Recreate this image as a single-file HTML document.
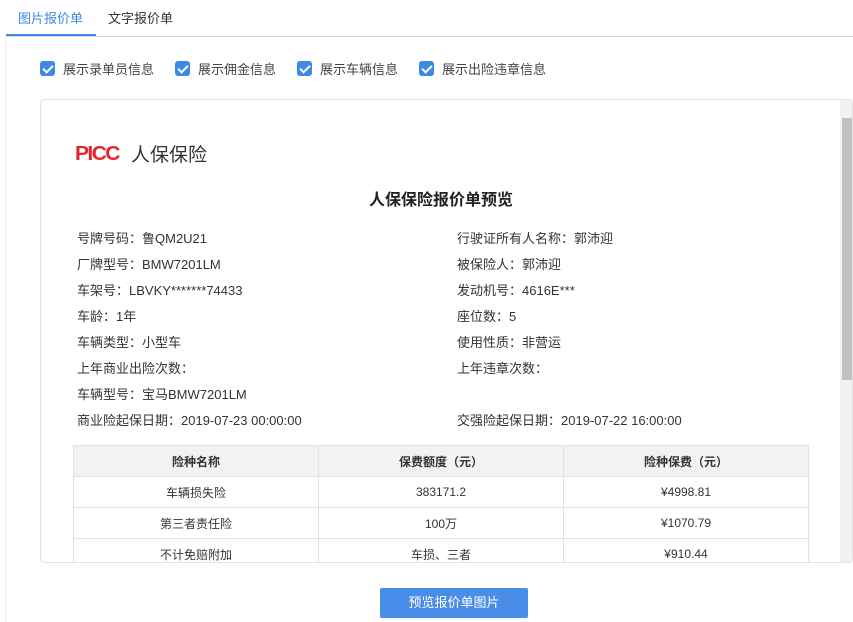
<!DOCTYPE html>
<html><head><meta charset="utf-8"><style>
*{margin:0;padding:0;box-sizing:border-box}
body{width:853px;height:622px;background:#fff;font-family:"Liberation Sans","Noto Sans CJK SC",sans-serif;color:#333;position:relative;overflow:hidden;font-size:13px}
.tabs{position:absolute;left:6px;top:0;right:0;height:37px;border-bottom:1px solid #c9d6e6}
.tab{position:absolute;top:8px;font-size:13px}
.act{color:#3d8ae6;left:12px}
.ul{position:absolute;left:0;width:90px;top:34px;height:2px;background:#3d8ae6}
.lb{position:absolute;left:5px;top:37px;width:1px;height:585px;background:#eee}
.cb{position:absolute;top:59px;display:flex;align-items:center;font-size:13px;color:#444}
.cb i{width:15px;height:15px;background:#3d8ae6;border-radius:3px;margin-right:8px;display:inline-block;position:relative}
.cb i:after{content:"";position:absolute;left:5px;top:2px;width:4px;height:8px;border:solid #fff;border-width:0 2px 2px 0;transform:rotate(45deg)}
.panel{position:absolute;left:40px;top:99px;width:813px;height:464px;border:1px solid #e3e3e3;border-radius:4px;overflow:hidden}
.sb{position:absolute;right:0;top:0;width:12px;height:100%;background:#f1f1f1}
.th{position:absolute;left:2px;top:18px;width:10px;height:262px;background:#c1c1c1}
.r{position:absolute;font-size:13px;color:#333}
table{position:absolute;left:32px;top:345px;width:736px;border-collapse:collapse;font-size:12px;color:#333}
td{border:1px solid #e3e3e3;height:31px;text-align:center;width:33.3%}
tr:first-child td{background:#f2f2f2;font-weight:bold}
.btn{position:absolute;left:380px;top:588px;width:148px;height:30px;background:#4a8de8;color:#fff;border-radius:2px;text-align:center;line-height:30px;font-size:13px}
</style></head><body>
<div class="tabs"><span class="tab act">图片报价单</span><span class="tab" style="left:102px;color:#333">文字报价单</span><div class="ul"></div></div>
<div class="lb"></div>
<div class="cb" style="left:40px"><i></i>展示录单员信息</div>
<div class="cb" style="left:175px"><i></i>展示佣金信息</div>
<div class="cb" style="left:297px"><i></i>展示车辆信息</div>
<div class="cb" style="left:419px"><i></i>展示出险违章信息</div>
<div class="panel">
<div class="r" style="left:34px;top:43px;font-size:20px;font-weight:900;color:#e3262e;letter-spacing:-1.5px;transform:scaleX(1.05);transform-origin:left">PICC</div>
<div class="r" style="left:90px;top:40px;font-size:19px">人保保险</div>
<div class="r" style="left:0;width:800px;text-align:center;top:86px;font-size:16px;font-weight:bold;color:#222">人保保险报价单预览</div>
<div class="r" style="left:36px;top:128px">号牌号码：鲁QM2U21</div>
<div class="r" style="left:36px;top:154px">厂牌型号：BMW7201LM</div>
<div class="r" style="left:36px;top:180px">车架号：LBVKY*******74433</div>
<div class="r" style="left:36px;top:206px">车龄：1年</div>
<div class="r" style="left:36px;top:232px">车辆类型：小型车</div>
<div class="r" style="left:36px;top:258px">上年商业出险次数：</div>
<div class="r" style="left:36px;top:284px">车辆型号：宝马BMW7201LM</div>
<div class="r" style="left:36px;top:310px">商业险起保日期：2019-07-23 00:00:00</div>
<div class="r" style="left:416px;top:128px">行驶证所有人名称：郭沛迎</div>
<div class="r" style="left:416px;top:154px">被保险人：郭沛迎</div>
<div class="r" style="left:416px;top:180px">发动机号：4616E***</div>
<div class="r" style="left:416px;top:206px">座位数：5</div>
<div class="r" style="left:416px;top:232px">使用性质：非营运</div>
<div class="r" style="left:416px;top:258px">上年违章次数：</div>
<div class="r" style="left:416px;top:310px">交强险起保日期：2019-07-22 16:00:00</div>
<table>
<tr><td>险种名称</td><td>保费额度（元）</td><td>险种保费（元）</td></tr>
<tr><td>车辆损失险</td><td>383171.2</td><td>¥4998.81</td></tr>
<tr><td>第三者责任险</td><td>100万</td><td>¥1070.79</td></tr>
<tr><td>不计免赔附加</td><td>车损、三者</td><td>¥910.44</td></tr>
</table>
<div class="sb"><div class="th"></div></div>
</div>
<div class="btn">预览报价单图片</div>
</body></html>
